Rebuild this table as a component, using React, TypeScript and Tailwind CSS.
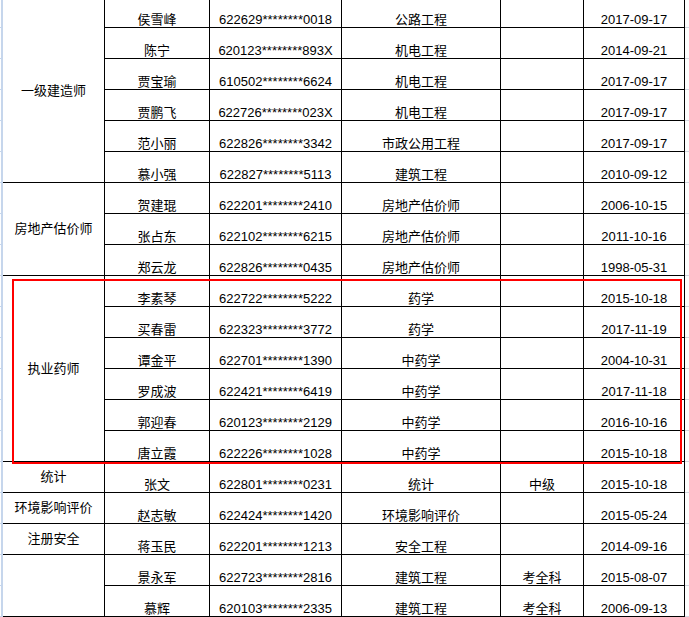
import { Fragment } from 'react'

const rows = [
  ['侯雪峰', '622629********0018', '公路工程', '', '2017-09-17'],
  ['陈宁', '620123********893X', '机电工程', '', '2014-09-21'],
  ['贾宝瑜', '610502********6624', '机电工程', '', '2017-09-17'],
  ['贾鹏飞', '622726********023X', '机电工程', '', '2017-09-17'],
  ['范小丽', '622826********3342', '市政公用工程', '', '2017-09-17'],
  ['慕小强', '622827********5113', '建筑工程', '', '2010-09-12'],
  ['贺建琨', '622201********2410', '房地产估价师', '', '2006-10-15'],
  ['张占东', '622102********6215', '房地产估价师', '', '2011-10-16'],
  ['郑云龙', '622826********0435', '房地产估价师', '', '1998-05-31'],
  ['李素琴', '622722********5222', '药学', '', '2015-10-18'],
  ['买春雷', '622323********3772', '药学', '', '2017-11-19'],
  ['谭金平', '622701********1390', '中药学', '', '2004-10-31'],
  ['罗成波', '622421********6419', '中药学', '', '2017-11-18'],
  ['郭迎春', '620123********2129', '中药学', '', '2016-10-16'],
  ['唐立霞', '622226********1028', '中药学', '', '2015-10-18'],
  ['张文', '622801********0231', '统计', '中级', '2015-10-18'],
  ['赵志敏', '622424********1420', '环境影响评价', '', '2015-05-24'],
  ['蒋玉民', '622201********1213', '安全工程', '', '2014-09-16'],
  ['景永军', '622723********2816', '建筑工程', '考全科', '2015-08-07'],
  ['慕辉', '620103********2335', '建筑工程', '考全科', '2006-09-13'],
]

// merged category cells in the first column, keyed by starting row
const groups: Record<number, { label: string; span: string }> = {
  0: { label: '一级建造师', span: 'row-span-6' },
  6: { label: '房地产估价师', span: 'row-span-3' },
  9: { label: '执业药师', span: 'row-span-6' },
  15: { label: '统计', span: 'row-span-1' },
  16: { label: '环境影响评价', span: 'row-span-1' },
  17: { label: '注册安全', span: 'row-span-1' },
  18: { label: '', span: 'row-span-2' },
}

const cell = 'flex items-end justify-center border-r border-b border-black pb-0 leading-[15px] whitespace-nowrap overflow-hidden'

export default function App() {
  return (
    <div className="relative h-[617px] w-[689px] overflow-hidden bg-white font-['Liberation_Sans','Noto_Sans_CJK_SC',sans-serif] text-[13px] text-black">
      <div className="grid grid-cols-[3px_102px_105px_132px_159px_83px_101px_5px] grid-rows-[28px_repeat(19,31px)]">
        {rows.map((r, i) => (
          <Fragment key={i}>
            <div className="border-r-2 border-b border-[#c6d6ec]" />
            {groups[i] && (
              <div
                className={`${groups[i].span} flex items-center justify-center border-r border-b border-black whitespace-nowrap`}
              >
                {groups[i].label}
              </div>
            )}
            <div className={cell}>{r[0]}</div>
            <div className={cell}>{r[1]}</div>
            <div className={cell}>{r[2]}</div>
            <div className={cell}>{r[3]}</div>
            <div className={cell}>{r[4]}</div>
            <div className="border-b border-[#d4d8e0]" />
          </Fragment>
        ))}
      </div>
      <div className="absolute left-[12px] top-[279px] h-[185px] w-[670px] border-2 border-[#ff0000]" />
    </div>
  )
}
